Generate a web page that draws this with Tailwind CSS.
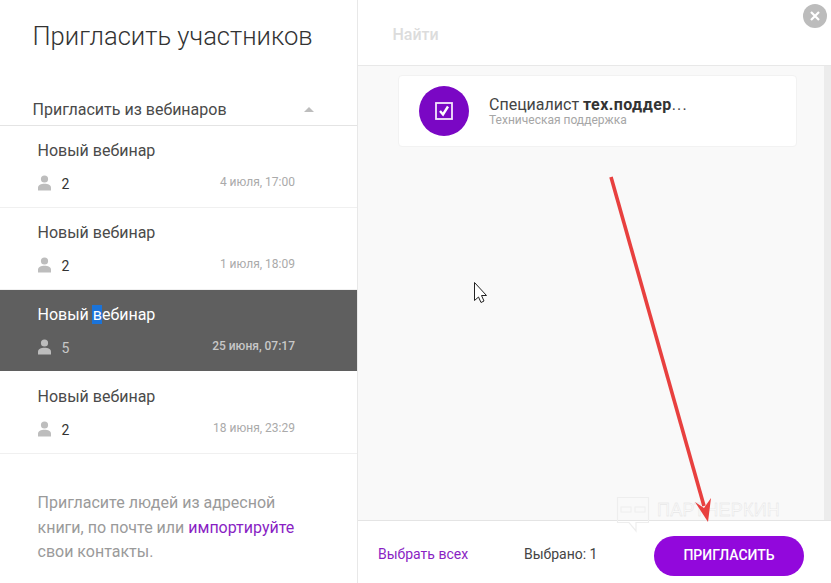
<!DOCTYPE html>
<html lang="ru">
<head>
<meta charset="utf-8">
<script src="https://cdn.jsdelivr.net/npm/@tailwindcss/browser@4"></script>
</head>
<body class="bg-white">
<div class="relative w-[831px] h-[583px] overflow-hidden flex font-['Roboto',sans-serif] bg-white">
  <aside class="w-[358px] h-full shrink-0 border-r border-[#e8e8e8] flex flex-col">
    <h1 class="pl-[32.5px] pt-[20px] h-[85px] text-[25.6px] leading-[32px] font-light text-[#333]">Пригласить участников</h1>
    <div class="h-[41px] pl-[32.5px] pr-[43px] pt-[15px] border-b border-[#e4e4e4] flex justify-between items-start">
      <span class="text-[16px] leading-[20px] text-[#4a4a4a]">Пригласить из вебинаров</span>
      <svg class="mt-[7px]" width="10" height="5" viewBox="0 0 10 5"><path d="M5 0L10 5H0Z" fill="#bdbdbd"/></svg>
    </div>
    <div class="h-[82px] pl-[37.5px] pr-[62px] pt-[15px] border-b border-[#f0f0f0]">
      <div class="text-[16px] leading-[20px] text-[#4a4a4a]">Новый вебинар</div>
      <div class="mt-[12px] flex items-center justify-between h-[20px]">
        <div class="flex items-center gap-[11px]">
          <svg width="13" height="16" viewBox="0 0 13 16"><circle cx="6.5" cy="4" r="3.6" fill="#bdbdbd"/><path d="M0 15.5V12.5C0 10 3 8.7 6.5 8.7S13 10 13 12.5V15.5Z" fill="#bdbdbd"/></svg>
          <span class="text-[14px] text-[#333] mt-[2px]">2</span>
        </div>
        <span class="text-[12px] text-[#aaa] -mt-[3px]">4 июля, 17:00</span>
      </div>
    </div>
    <div class="h-[82px] pl-[37.5px] pr-[62px] pt-[15px] border-b border-[#f0f0f0]">
      <div class="text-[16px] leading-[20px] text-[#4a4a4a]">Новый вебинар</div>
      <div class="mt-[12px] flex items-center justify-between h-[20px]">
        <div class="flex items-center gap-[11px]">
          <svg width="13" height="16" viewBox="0 0 13 16"><circle cx="6.5" cy="4" r="3.6" fill="#bdbdbd"/><path d="M0 15.5V12.5C0 10 3 8.7 6.5 8.7S13 10 13 12.5V15.5Z" fill="#bdbdbd"/></svg>
          <span class="text-[14px] text-[#333] mt-[2px]">2</span>
        </div>
        <span class="text-[12px] text-[#aaa] -mt-[3px]">1 июля, 18:09</span>
      </div>
    </div>
    <div class="h-[82px] pl-[37.5px] pr-[62px] pt-[15px] bg-[#5f5f5f] border-b border-white">
      <div class="text-[16px] leading-[20px] text-white"><span>Новый </span><span class="bg-[#1a73d9] inline-block leading-[19px] pl-[1px] -ml-[1px]">в</span><span>ебинар</span></div>
      <div class="mt-[12px] flex items-center justify-between h-[20px]">
        <div class="flex items-center gap-[11px]">
          <svg width="13" height="16" viewBox="0 0 13 16"><circle cx="6.5" cy="4" r="3.6" fill="#bdbdbd"/><path d="M0 15.5V12.5C0 10 3 8.7 6.5 8.7S13 10 13 12.5V15.5Z" fill="#bdbdbd"/></svg>
          <span class="text-[14px] text-[#c8c8c8] mt-[2px]">5</span>
        </div>
        <span class="text-[12px] text-[#c8c8c8] font-medium -mt-[3px]">25 июня, 07:17</span>
      </div>
    </div>
    <div class="h-[82px] pl-[37.5px] pr-[62px] pt-[15px] border-b border-[#f0f0f0]">
      <div class="text-[16px] leading-[20px] text-[#4a4a4a]">Новый вебинар</div>
      <div class="mt-[12px] flex items-center justify-between h-[20px]">
        <div class="flex items-center gap-[11px]">
          <svg width="13" height="16" viewBox="0 0 13 16"><circle cx="6.5" cy="4" r="3.6" fill="#bdbdbd"/><path d="M0 15.5V12.5C0 10 3 8.7 6.5 8.7S13 10 13 12.5V15.5Z" fill="#bdbdbd"/></svg>
          <span class="text-[14px] text-[#333] mt-[2px]">2</span>
        </div>
        <span class="text-[12px] text-[#aaa] -mt-[3px]">18 июня, 23:29</span>
      </div>
    </div>
    <p class="pl-[37.5px] pr-[40px] pt-[37px] text-[16px] leading-[24.5px] text-[#9a9a9a]">Пригласите людей из адресной книги, по почте или <span class="text-[#8a1fc4]">импортируйте</span> свои контакты.</p>
  </aside>
  <main class="flex-1 h-full flex flex-col min-w-0">
    <div class="h-[66px] shrink-0 border-b border-[#e8e8e8] pl-[34.5px] pt-[25px] text-[16px] leading-[20px] font-medium text-[#dcdcdc]">Найти</div>
    <div class="flex-1 bg-[#f9f9f9] flex min-h-0">
      <div class="flex-1 pt-[9px] pl-[40px]">
        <div class="w-[399px] h-[72px] bg-white rounded-[4px] border border-[#f2f2f2] flex items-center pl-[20px] gap-[20px]">
          <div class="w-[50px] h-[50px] rounded-full bg-[#7a07c4] flex items-center justify-center">
            <svg width="18" height="18" viewBox="0 0 18 18" fill="none"><rect x="1" y="1" width="16" height="16" stroke="#f3e6fb" stroke-width="1.8"/><path d="M5 9L8 12.5L13 4.5" stroke="#fff" stroke-width="2.4"/></svg>
          </div>
          <div class="flex flex-col">
            <div class="text-[16px] leading-[19px] text-[#444]">Специалист <b class="font-bold text-[#333] tracking-[0.4px]">тех.поддер</b><span class="tracking-[1.2px]">...</span></div>
            <div class="text-[12px] leading-[13px] text-[#a6a6a6]">Техническая поддержка</div>
          </div>
        </div>
      </div>
      <div class="w-[7px] bg-[#ececec]"></div>
    </div>
    <div class="h-[63px] shrink-0 border-t border-[#e4e4e4] bg-white flex items-center pl-[20px] pr-[27px]">
      <span class="text-[14px] text-[#8a1fc4] w-[146px] mt-[4px]">Выбрать всех</span>
      <span class="text-[14px] text-[#444] w-[130px] mt-[4px]">Выбрано: 1</span>
      <button class="w-[150px] h-[40px] rounded-full bg-[#9208dc] text-white text-[14px] font-medium mt-[7px]">ПРИГЛАСИТЬ</button>
    </div>
  </main>

  <div class="absolute left-[803px] top-[4px] w-[24px] h-[24px] rounded-full bg-[#bcbcbc] flex items-center justify-center">
    <svg width="10" height="10" viewBox="0 0 10 10"><path d="M1 1L9 9M9 1L1 9" stroke="#fff" stroke-width="2.2"/></svg>
  </div>

  <div class="absolute left-[616px] top-[496px] flex items-start gap-[7px] pointer-events-none">
    <svg width="34" height="37" viewBox="0 0 34 37" fill="none"><path d="M1.5 1.5H32.5V26.5H20V35L13 26.5H1.5Z" stroke="#eeeeee" stroke-width="1.2"/><rect x="5" y="11" width="10" height="5" stroke="#eeeeee"/><rect x="19" y="11" width="10" height="5" stroke="#eeeeee"/></svg>
    <span class="mt-[6px] text-[18px] leading-[16px] text-transparent [-webkit-text-stroke:0.35px_#e0e0e0] font-['Liberation_Sans',sans-serif] tracking-[0.25px]">ПАРТНЕРКИН</span>
  </div>

  <svg class="absolute left-0 top-0 pointer-events-none" width="831" height="583" viewBox="0 0 831 583" fill="none">
    <path d="M611 177L704 506" stroke="#e8403f" stroke-width="3.6"/>
    <path d="M695 502L704 508L711 498L708 522Z" fill="#e8403f"/>
    <path d="M474.5 282.5V300.5L478.5 297L481 302.5L484 301L481.5 295.5H486.5Z" fill="#fff" stroke="#222" stroke-width="1"/>
  </svg>
</div>
</body>
</html>
